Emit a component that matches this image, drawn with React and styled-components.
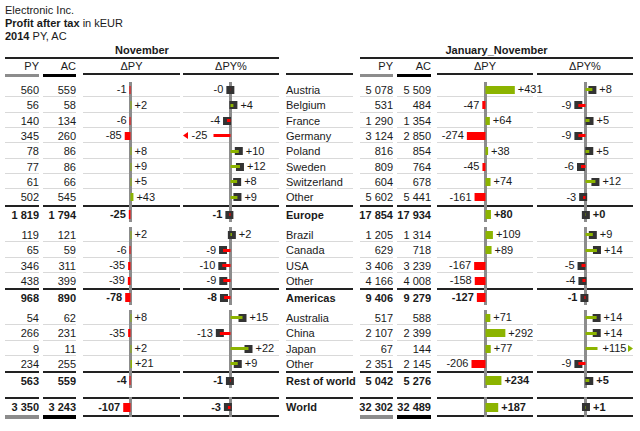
import React from 'react';
import styled, { createGlobalStyle, css } from 'styled-components';

const GREEN = '#8cb400';
const RED = '#ff0000';
const AXIS = '#8c8c8c';
const INK = '#222';
const TEXT = '#1a1a1a';
const SEP = '#d9d9d9';
const MARK = '#333';
const BAR_K = 0.068;
const PIN_K = 0.81;

// [name, PY nov, AC nov, PY jan-nov, AC jan-nov]
const GROUPS = [
  {
    rows: [
      ['Austria', 560, 559, 5078, 5509],
      ['Belgium', 56, 58, 531, 484],
      ['France', 140, 134, 1290, 1354],
      ['Germany', 345, 260, 3124, 2850],
      ['Poland', 78, 86, 816, 854],
      ['Sweden', 77, 86, 809, 764],
      ['Switzerland', 61, 66, 604, 678],
      ['Other', 502, 545, 5602, 5441],
    ],
    sub: ['Europe', 1819, 1794, 17854, 17934],
  },
  {
    rows: [
      ['Brazil', 119, 121, 1205, 1314],
      ['Canada', 65, 59, 629, 718],
      ['USA', 346, 311, 3406, 3239],
      ['Other', 438, 399, 4166, 4008],
    ],
    sub: ['Americas', 968, 890, 9406, 9279],
  },
  {
    rows: [
      ['Australia', 54, 62, 517, 588],
      ['China', 266, 231, 2107, 2399],
      ['Japan', 9, 11, 67, 144],
      ['Other', 234, 255, 2351, 2145],
    ],
    sub: ['Rest of world', 563, 559, 5042, 5276],
  },
];
const WORLD = ['World', 3350, 3243, 32302, 32489];

const COLS = [
  { id: 'pyL', side: 0, kind: 'py', w: 34, ml: 0, head: 'PY' },
  { id: 'acL', side: 0, kind: 'ac', w: 33, ml: 4, head: 'AC' },
  { id: 'dL', side: 0, kind: 'bar', w: 97, ml: 7, ax: 47.5, head: 'ΔPY' },
  { id: 'pL', side: 0, kind: 'pin', w: 96, ml: 3, ax: 47.5, clip: 17, head: 'ΔPY%' },
  { id: 'name', kind: 'name', w: 67, ml: 7, head: '' },
  { id: 'pyR', side: 1, kind: 'py', w: 33, ml: 7, head: 'PY' },
  { id: 'acR', side: 1, kind: 'ac', w: 34, ml: 4, head: 'AC' },
  { id: 'dR', side: 1, kind: 'bar', w: 96, ml: 6, ax: 48.5, head: 'ΔPY' },
  { id: 'pR', side: 1, kind: 'pin', w: 96, ml: 4, ax: 48.5, clip: 12, head: 'ΔPY%' },
];

const fmt = (n) => String(n).replace(/\B(?=(\d{3})+(?!\d))/g, ' ');
const signed = (v, shown) => (v < 0 ? '-' : '+') + shown;

const GlobalStyle = createGlobalStyle`
  html, body { margin: 0; padding: 0; background: #fff; }
  body {
    font-family: "Liberation Sans", Arial, sans-serif;
    font-size: 11px;
    color: ${TEXT};
  }
`;

const Page = styled.div`
  width: 640px;
  height: 431px;
  box-sizing: border-box;
  padding: 4px 0 0 5px;
  overflow: hidden;
`;

const Title = styled.div`
  line-height: 13px;
  white-space: nowrap;
  b { font-weight: bold; }
`;

const PeriodBar = styled.div`
  display: flex;
  gap: 81px;
  margin-top: 1px;
`;

const Period = styled.div`
  flex: none;
  width: ${(p) => p.$w}px;
  height: 13px;
  line-height: 13px;
  text-align: center;
  font-weight: bold;
  border-bottom: 2px solid ${INK};
`;

const HeadRow = styled.div`
  display: flex;
  align-items: flex-start;
  height: 18px;
`;

const Head = styled.div`
  flex: none;
  width: ${(p) => p.$w}px;
  margin-left: ${(p) => p.$ml}px;
  height: 14px;
  line-height: 14px;
  white-space: nowrap;
  text-align: ${(p) => (p.$kind === 'py' || p.$kind === 'ac' ? 'right' : 'center')};
  ${(p) =>
    p.$kind === 'py'
      ? css`padding-bottom: 1px; border-bottom: 3px solid ${AXIS};`
      : p.$kind === 'ac'
      ? css`padding-bottom: 1px; border-bottom: 3px solid #000;`
      : css`border-bottom: 2px solid ${INK};`}
`;

const Group = styled.div`
  margin-top: ${(p) => p.$mt}px;
`;

const RowBox = styled.div`
  display: flex;
  align-items: flex-start;
`;

const footer = (kind) => {
  if (kind === 'py') return css`border-bottom: 4px solid ${AXIS};`;
  if (kind === 'ac') return css`border-bottom: 4px solid #000;`;
  if (kind === 'bar' || kind === 'pin') return css`border-bottom: 2px solid ${INK};`;
  return null;
};

const Cell = styled.div`
  flex: none;
  width: ${(p) => p.$w}px;
  height: ${(p) => p.$h}px;
  margin-left: ${(p) => p.$ml}px;
  display: flex;
  align-items: center;
  justify-content: ${(p) => (p.$kind === 'py' || p.$kind === 'ac' ? 'flex-end' : 'flex-start')};
  white-space: nowrap;
  font-weight: ${(p) => (p.$strong ? 700 : 400)};
  ${(p) =>
    p.$variant === 'item' &&
    css`background: linear-gradient(${SEP}, ${SEP}) left bottom / 100% 1px no-repeat;`}
  ${(p) => (p.$variant === 'sub' || p.$variant === 'total') && css`border-top: 2px solid ${INK};`}
  ${(p) => p.$variant === 'total' && footer(p.$kind)}
`;

const Plot = styled.svg`
  display: block;
  flex: none;
  overflow: visible;
  font-family: "Liberation Sans", Arial, sans-serif;
  font-size: 11px;
  font-weight: inherit;
  text {
    fill: ${TEXT};
  }
`;

// axis runs through the thick rules above totals and below the grand total
function AxisLine({ ax, h, variant }) {
  const top = variant === 'sub' || variant === 'total' ? -2 : 0;
  const bottom = variant === 'total' ? h + 2 : h;
  return <rect x={ax - 1.5} y={top} width={3} height={bottom - top} fill={AXIS} />;
}

function BarChart({ value, col, h, strong, variant }) {
  const w = Math.max(1, Math.abs(value) * BAR_K);
  const neg = value < 0;
  const { ax } = col;
  const bh = strong ? 9 : 8;
  const ty = h / 2 + 3.7;
  return (
    <Plot width={col.w} height={h}>
      <AxisLine ax={ax} h={h} variant={variant} />
      <rect x={neg ? ax - w : ax} y={Math.round((h - bh) / 2)} width={w} height={bh} fill={neg ? RED : GREEN} />
      <text x={neg ? ax - w - 3 : ax + w + 3} y={ty} textAnchor={neg ? 'end' : 'start'}>
        {signed(value, Math.abs(value))}
      </text>
    </Plot>
  );
}

function PinChart({ pct, col, h, variant }) {
  const neg = pct < 0;
  const { ax } = col;
  const color = neg ? RED : GREEN;
  const text = signed(pct, Math.round(Math.abs(pct)));
  const ty = h / 2 + 3.7;
  const sy = Math.round((h - 3) / 2);

  if (Math.abs(pct) > 24) {
    const len = col.clip;
    const cy = h / 2;
    const tip = neg
      ? `0,${cy} 5,${cy - 3.5} 5,${cy + 3.5}`
      : `${col.w},${cy} ${col.w - 5},${cy - 3.5} ${col.w - 5},${cy + 3.5}`;
    return (
      <Plot width={col.w} height={h}>
        <AxisLine ax={ax} h={h} variant={variant} />
        <rect x={neg ? ax - len : ax} y={sy} width={len} height={3} fill={color} />
        <text x={neg ? ax - len - 6 : ax + len + 5} y={ty} textAnchor={neg ? 'end' : 'start'}>
          {text}
        </text>
        <polygon points={tip} fill={color} />
      </Plot>
    );
  }

  const pos = ax + pct * PIN_K;
  return (
    <Plot width={col.w} height={h}>
      <AxisLine ax={ax} h={h} variant={variant} />
      <rect x={pos - 4} y={Math.round((h - 8) / 2)} width={8} height={8} fill={MARK} />
      <rect x={Math.min(ax, pos)} y={sy} width={Math.abs(pos - ax)} height={3} fill={color} />
      <text x={neg ? pos - 7 : pos + 7} y={ty} textAnchor={neg ? 'end' : 'start'}>
        {text}
      </text>
    </Plot>
  );
}

function Row({ data, variant, h }) {
  const strong = variant === 'sub' || variant === 'total';
  return (
    <RowBox>
      {COLS.map((col) => {
        let content = null;
        if (col.kind === 'name') {
          content = data[0];
        } else {
          const py = data[1 + col.side * 2];
          const ac = data[2 + col.side * 2];
          if (col.kind === 'py') content = fmt(py);
          if (col.kind === 'ac') content = fmt(ac);
          if (col.kind === 'bar')
            content = <BarChart value={ac - py} col={col} h={h} strong={strong} variant={variant} />;
          if (col.kind === 'pin')
            content = <PinChart pct={((ac - py) / py) * 100} col={col} h={h} variant={variant} />;
        }
        return (
          <Cell
            key={col.id}
            $w={col.w}
            $ml={col.ml}
            $h={h}
            $kind={col.kind}
            $variant={variant}
            $strong={strong}
          >
            {content}
          </Cell>
        );
      })}
    </RowBox>
  );
}

export default function App() {
  return (
    <>
      <GlobalStyle />
      <Page>
        <Title>
          <div>Electronic Inc.</div>
          <div>
            <b>Profit after tax</b> in kEUR
          </div>
          <div>
            <b>2014</b> PY, AC
          </div>
        </Title>

        <PeriodBar>
          <Period $w={274}>November</Period>
          <Period $w={273}>January_November</Period>
        </PeriodBar>

        <HeadRow>
          {COLS.map((col) => (
            <Head key={col.id} $w={col.w} $ml={col.ml} $kind={col.kind}>
              {col.head}
            </Head>
          ))}
        </HeadRow>

        {GROUPS.map((g, gi) => (
          <Group key={gi} $mt={5}>
            {g.rows.map((r, i) => (
              <Row
                key={i}
                data={r}
                h={i % 3 === 1 ? 16 : 15}
                variant={i === g.rows.length - 1 ? 'last' : 'item'}
              />
            ))}
            <Row data={g.sub} h={15} variant="sub" />
          </Group>
        ))}

        <Group $mt={9}>
          <Row data={WORLD} h={16} variant="total" />
        </Group>
      </Page>
    </>
  );
}
